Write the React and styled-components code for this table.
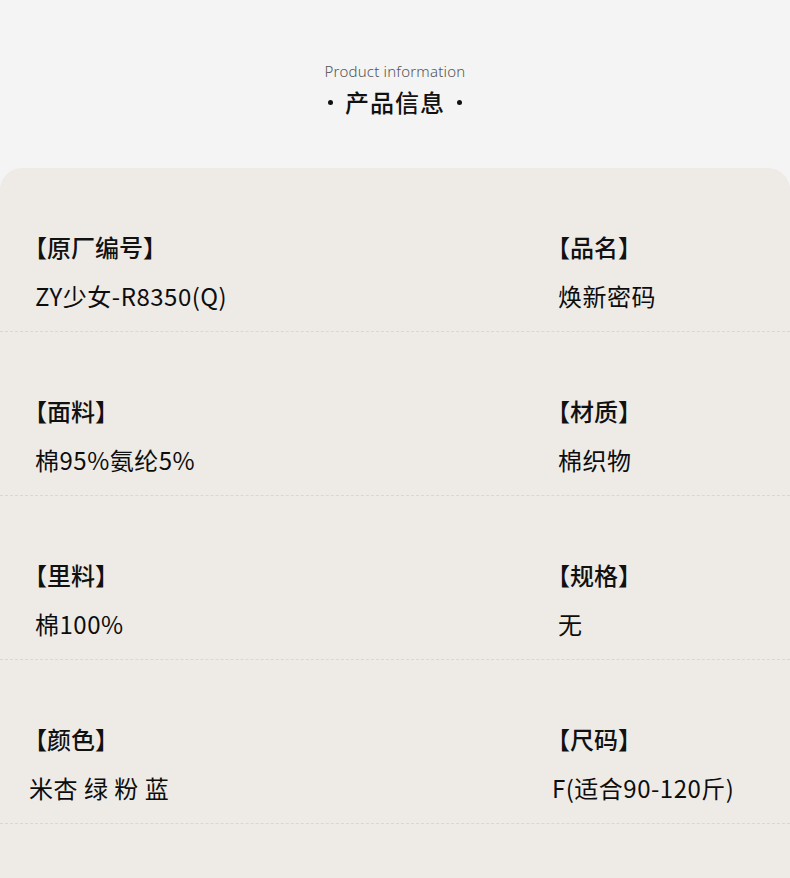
import styled, { createGlobalStyle } from 'styled-components';

const GlobalStyle = createGlobalStyle`
	html, body {
		margin: 0;
		padding: 0;
		background: #f4f4f4;
	}
	body {
		font-family: "Noto Sans CJK SC", "Noto Sans", sans-serif;
		color: #111;
	}
`;

const specs = [
	[{ label: '原厂编号', value: 'ZY少女-R8350(Q)' }, { label: '品名', value: '焕新密码' }],
	[{ label: '面料', value: '棉95%氨纶5%' }, { label: '材质', value: '棉织物' }],
	[{ label: '里料', value: '棉100%' }, { label: '规格', value: '无' }],
	[{ label: '颜色', value: '米杏 绿 粉 蓝', shift: true }, { label: '尺码', value: 'F(适合90-120斤)', shift: true }],
];

export default function App() {
	return (
		<Page>
			<GlobalStyle />
			<Header>
				<Subtitle>Product information</Subtitle>
				<Title>
					<Dot />
					产品信息
					<Dot />
				</Title>
			</Header>
			<Card>
				{specs.map((row, i) => (
					<Row key={i}>
						{row.map((item) => (
							<Cell key={item.label}>
								<Label>【{item.label}】</Label>
								<Value $shift={item.shift}>{item.value}</Value>
							</Cell>
						))}
					</Row>
				))}
			</Card>
		</Page>
	);
}

const Page = styled.div`
	width: 790px;
	min-height: 878px;
	display: flex;
	flex-direction: column;
`;

const Header = styled.div`
	height: 168px;
	display: flex;
	flex-direction: column;
	align-items: center;
	padding-top: 61px;
	box-sizing: border-box;
`;

const Subtitle = styled.div`
	font-family: "Noto Sans", sans-serif;
	font-size: 15px;
	line-height: 20px;
	letter-spacing: 0.2px;
	font-weight: 300;
	color: #555;
`;

const Title = styled.div`
	display: flex;
	align-items: center;
	gap: 12px;
	margin-top: 6px;
	font-size: 24px;
	line-height: 30px;
	font-weight: 500;
	color: #111;
	letter-spacing: 1px;
`;

const Dot = styled.span`
	width: 5px;
	height: 5px;
	border-radius: 50%;
	background: #111;
`;

const Card = styled.div`
	flex: 1;
	background: #eeebe6;
	border-radius: 22px 22px 0 0;
	padding-bottom: 54px;
`;

const Row = styled.div`
	display: grid;
	grid-template-columns: 523px 1fr;
	height: 164px;
	box-sizing: border-box;
	padding: 64px 0 0 35px;
	border-bottom: 1px dashed #dad7d2;
`;

const Cell = styled.div`
	display: flex;
	flex-direction: column;
`;

const Label = styled.div`
	margin-left: -12px;
	font-size: 24px;
	line-height: 30px;
	font-weight: 500;
	color: #111;
`;

const Value = styled.div`
	margin-top: 19px;
	margin-left: ${(p) => (p.$shift ? '-6px' : '0')};
	font-size: 24px;
	line-height: 30px;
	letter-spacing: 0.5px;
	color: #0d0d0d;
`;
